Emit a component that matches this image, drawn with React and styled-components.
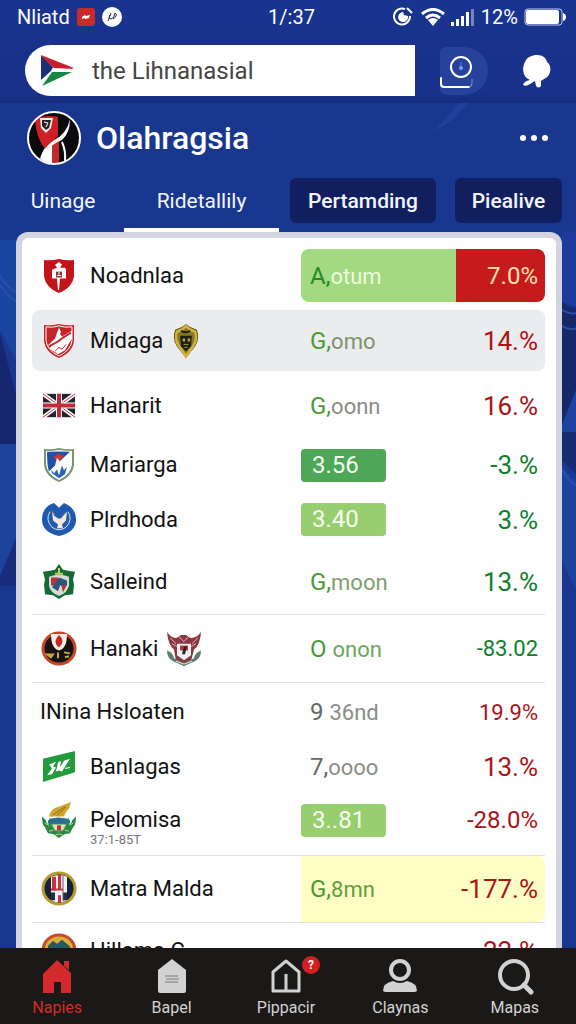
import React from 'react';
import styled, { createGlobalStyle, css } from 'styled-components';

const GlobalStyle = createGlobalStyle`
  * {
    box-sizing: border-box;
  }

  body {
    margin: 0;
    font-family: Roboto, "Liberation Sans", sans-serif;
    background: #1a3790;
  }

  button, input {
    font-family: inherit;
  }
`;

const Page = styled.div`
  position: relative;
  display: flex;
  flex-direction: column;
  height: 100vh;
  overflow: hidden;
  background: #1a3790;
`;

const Backdrop = styled.svg`
  position: absolute;
  inset: 0;
  width: 100%;
  height: 100%;
`;

const TopBar = styled.header`
  position: relative;
  padding-bottom: 7px;
  color: #fff;
  background: linear-gradient(#19348f, #18318a 90%, #162c7c);
`;

const StatusBar = styled.div`
  display: grid;
  grid-template-columns: 1fr auto 1fr;
  align-items: center;
  height: 34px;
  padding: 0 10px 0 17px;
  font-size: 20px;
`;

const StatusGroup = styled.div`
  display: flex;
  align-items: center;
  justify-content: ${({ $end }) => ($end ? 'flex-end' : 'flex-start')};
  gap: ${({ $end }) => ($end ? '6px' : '7px')};
`;

const SearchRow = styled.div`
  display: flex;
  align-items: center;
  gap: 25px;
  margin-top: 11px;
  padding: 0 15px 0 25px;
`;

const SearchBox = styled.label`
  display: flex;
  align-items: center;
  flex: 1;
  min-width: 0;
  height: 51px;
  padding-left: 14px;
  gap: 17px;
  border-radius: 26px 0 0 26px;
  background: #fff;
`;

const SearchInput = styled.input`
  flex: 1;
  min-width: 0;
  padding: 0;
  border: 0;
  outline: 0;
  background: transparent;
  color: #454545;
  font-size: 24px;
`;

const IconButton = styled.button`
  display: flex;
  align-items: center;
  justify-content: center;
  width: 48px;
  height: 48px;
  padding: 0;
  border: 0;
  color: #fff;
  background: ${({ $filled }) => ($filled ? '#26429a' : 'transparent')};
  border-radius: ${({ $filled }) => ($filled ? '6px 24px 24px 6px' : '0')};
`;

const TitleRow = styled.div`
  position: relative;
  display: flex;
  align-items: center;
  gap: 15px;
  height: 70px;
  padding: 0 18px 0 27px;
`;

const Title = styled.h1`
  flex: 1;
  margin: 0;
  color: #fff;
  font-size: 32px;
  font-weight: 500;
  line-height: 36px;
`;

const Tabs = styled.nav`
  position: relative;
  display: flex;
  gap: 11px;
  height: 59px;
  padding: 5px 14px 0 16px;
`;

const TabGroup = styled.div`
  display: flex;
  flex: ${({ $grow }) => $grow} 1 0;
  gap: ${({ $gap }) => $gap || '0'};
`;

const Tab = styled.button`
  flex: ${({ $grow }) => $grow} 1 0;
  height: 54px;
  padding: 0 0 4px;
  border: 0;
  border-bottom: 4px solid ${({ $active }) => ($active ? '#fff' : 'transparent')};
  color: #f2f6ff;
  background: transparent;
  font-size: 21px;
  white-space: nowrap;
`;

const TabPill = styled(Tab)`
  height: 45px;
  padding: 0;
  border: 0;
  border-radius: 6px;
  background: #121f5f;
  font-weight: 500;
`;

const Panel = styled.main`
  position: relative;
  flex: 1;
  min-height: 0;
  overflow: hidden;
  margin: 0 14px 0 16px;
  padding: 11px 11px 0 10px;
  border: 6px solid #d2d4df;
  border-bottom: 0;
  border-radius: 12px 12px 0 0;
  background: #fefefe;
`;

const Table = styled.table`
  display: block;
  width: 100%;

  tbody {
    display: block;
  }
`;

const Row = styled.tr`
  display: grid;
  grid-template-columns: 58px 211fr 155fr 89fr;
  height: ${({ $height }) => $height}px;
  margin-bottom: ${({ $gap }) => $gap || 0}px;
  padding-bottom: ${({ $note }) => ($note ? '8px' : '0')};
  border-bottom: ${({ $line }) => ($line ? '1px solid #e2e2e2' : '0')};
  border-radius: ${({ $selected }) => ($selected ? '8px' : '0')};
  background: ${({ $selected }) => ($selected ? '#ebeced' : 'transparent')};
`;

const CrestCell = styled.td`
  display: flex;
  align-items: center;
  padding: 0 0 0 9px;
`;

const NameCell = styled.th`
  display: flex;
  align-items: center;
  gap: 8px;
  grid-column: ${({ $wide }) => ($wide ? 'span 2' : 'auto')};
  padding: 0 0 0 ${({ $wide }) => ($wide ? '8px' : '0')};
  color: #111;
  font-size: 22px;
  font-weight: 400;
  line-height: 26px;
  text-align: left;
  white-space: nowrap;

  ${({ $note }) => $note && css`
    flex-direction: column;
    align-items: flex-start;
    gap: 0;
    padding-top: 14px;
  `}
`;

const Note = styled.small`
  color: #777;
  font-size: 13px;
  line-height: 14px;
`;

const fills = {
  split: ['#a2d981', '#c51b1c'],
  yellow: ['#fffec4', '#fffec4'],
};

const ValueCell = styled.td`
  display: flex;
  align-items: center;
  padding: 0 0 0 ${({ $pill }) => ($pill ? '0' : '9px')};
  border-radius: ${({ $fill }) => ($fill === 'split' ? '8px 0 0 8px' : '0')};
  background: ${({ $fill }) => ($fill ? fills[$fill][0] : 'transparent')};
  color: ${({ $color }) => $color || '#4b9a35'};
  font-size: 24px;
  white-space: nowrap;
`;

const Rest = styled.span`
  color: ${({ $color }) => $color || '#8b8d86'};
  font-size: 22px;
`;

const Pill = styled.span`
  width: 85px;
  padding-left: 11px;
  border-radius: 4px;
  background: ${({ $dark }) => ($dark ? '#4da757' : '#96ce70')};
  color: #f8fff2;
  line-height: 33px;
`;

const ChangeCell = styled.td`
  display: flex;
  align-items: center;
  justify-content: flex-end;
  padding: 0 7px 0 0;
  border-radius: ${({ $fill }) => ($fill ? '0 8px 8px 0' : '0')};
  background: ${({ $fill }) => ($fill ? fills[$fill][1] : 'transparent')};
  color: ${({ $up, $fill }) => ($fill === 'split' ? '#ffe0b0' : $up ? '#0f7f2c' : '#ad1217')};
  font-size: ${({ $size }) => $size || 26}px;
  white-space: nowrap;
`;

const BottomNav = styled.nav`
  position: relative;
  display: grid;
  grid-template-columns: repeat(5, 1fr);
  height: 76px;
  padding-right: 4px;
  background: #1a1918;
`;

const NavLink = styled.a`
  display: flex;
  flex-direction: column;
  align-items: center;
  padding-top: 9px;
  gap: 3px;
  color: ${({ $active }) => ($active ? '#d52a2b' : '#d2d2d2')};
  font-size: 16px;
  line-height: 20px;
  text-decoration: none;
`;

const NavIcon = styled.span`
  position: relative;
  display: flex;
`;

const Badge = styled.span`
  position: absolute;
  top: -1px;
  right: -16px;
  width: 18px;
  height: 18px;
  border-radius: 50%;
  background: #d1201f;
  color: #fff;
  font-size: 12px;
  font-weight: 700;
  line-height: 18px;
  text-align: center;
`;

const SHIELD = 'M3 2Q10 3 18 1Q26 3 33 2V18Q32 30 18 36Q4 30 3 18Z';

const crests = {
  red: (
    <>
      <path d={SHIELD} fill="#c3131b" />
      <path d="M18 4l3 3-2 3h5l1 2v9h-6l-1 12h-1l-1-12h-5v-9l5-2-2-3z" fill="#fff" />
      <path d="M15 14h6v6h-6z" fill="#8d3a3d" />
      <path d="M16 18h4M18 14v3" stroke="#fff" />
    </>
  ),
  slash: (
    <>
      <path d={SHIELD} fill="#c3252b" />
      <path d="M5 4Q12 5 18 3Q24 5 31 4V18Q30 28 18 34Q6 28 5 18Z" fill="none" stroke="#fff" />
      <path d="M18 5l2 4-1 2 2 3 10-6v8l-7 12-7 4-9-6 4-4-6 2 8-8 2-6z" fill="#fff" />
      <path d="M8 24l9-5 5-4 8-5" fill="none" stroke="#c3252b" strokeWidth="2" />
      <path d="M14 29l4-4 3 2 4-5" fill="none" stroke="#c3252b" />
    </>
  ),
  flag: (
    <>
      <path d="M2 6h32v24H2z" fill="#24242f" />
      <path d="M2 6l32 24M34 6L2 30" stroke="#fff" strokeWidth="4" />
      <path d="M2 6l32 24M34 6L2 30" stroke="#bd2738" strokeWidth="1" />
      <path d="M18 6v24M2 18h32" stroke="#fff" strokeWidth="6" />
      <path d="M18 6v24M2 18h32" stroke="#c22a37" strokeWidth="4" />
    </>
  ),
  blueShield: (
    <>
      <path d={SHIELD} fill="#7c9270" />
      <path d="M5 4Q12 4 18 3Q25 4 31 4V18Q30 28 18 34Q6 28 5 18Z" fill="#fff" />
      <path d="M6 5Q18 4 29 5L8 25Q6 20 6 5Z" fill="#1f51a8" />
      <path d="M12 11l5-4 6 2-5 6z" fill="#cf3432" />
      <path d="M16 11l3 4-1 4 4 2-2 7-4-5-5 4 3-8z" fill="#f5f4ef" />
      <path d="M10 23l3 4 3-4 2 6 3-10 2 5 3-4-2 8-6 4-7-5z" fill="#3163b4" />
    </>
  ),
  blueRound: (
    <>
      <path d="M13 1l5 5 5-5q12 5 12 17 0 13-17 17Q1 31 1 18 1 5 13 1Z" fill="#1f5ab0" />
      <path d="M9 10Q4 18 11 26q7 5 14 0 7-8 2-16" fill="none" stroke="#dbe8f7" strokeWidth="1" />
      <path d="M11 9l2 5 4 3h3l4-5 2-2-1 9-4 4 1 4h-6l1-4-5-4z" fill="#f2ead3" />
      <path d="M11 10l3 3M24 12l-3 3" stroke="#c78238" />
    </>
  ),
  green: (
    <>
      <path d="M18 0l4 6 5 1 7 1-2 8 1 5-1 10-8 1-6 4-6-4-8-1-1-10 1-5-2-8 7-1 5-1z" fill="#126b35" />
      <path d="M8 13q10-4 20 0v9q-2 8-10 11Q9 29 8 22Z" fill="#d9d8d1" />
      <path d="M10 14h7v8h-7zM20 21h6l-4 8z" fill="#b9343a" />
      <path d="M18 14l8 3v5h-7l-2 6-6-4z" fill="#32547c" />
      <path d="M18 4v8M14 10h8" stroke="#c2cf60" strokeWidth="2" />
    </>
  ),
  blackRed: (
    <>
      <circle cx="18" cy="18" r="16" fill="#171210" stroke="#c64427" strokeWidth="3" />
      <path d="M10 3h16q0 15-8 17-8-2-8-17Z" fill="#f5eee5" />
      <path d="M18 4q7 6 0 13-7-6 0-13Z" fill="#c62524" />
      <path d="M6 24h6l-2 3zM17 22v6M23 22l6 1M24 27l4-1" stroke="#c3ab3d" strokeWidth="2" fill="#c3ab3d" />
    </>
  ),
  banner: (
    <>
      <path d="M2 10L34 2v22L2 34Z" fill="#229b3d" />
      <path d="M8 16l7-3-3 5 3 1-4 7-5 1 5-7zM17 14l3-2-1 7 4-7 6-2-8 13-3-1-3 1z" fill="#fff" />
      <path d="M24 20l5-1" stroke="#fff" />
    </>
  ),
  palm: (
    <>
      <path d="M8 15Q10 6 18 5L30 0l-2 7q-3 2-5 8Z" fill="#d2a32d" />
      <path d="M12 13l12-8M16 14l9-9" stroke="#8f711b" />
      <path d="M8 17h20v8q-4 7-10 8Q9 29 8 25Z" fill="#35926b" />
      <path d="M7 19q10-6 22 0v3H7z" fill="#276f8e" />
      <path d="M11 23h14l-3 6h-8z" fill="#e6dfa7" />
      <path d="M16 24h4v5h-4z" fill="#b43b32" />
      <path d="M1 15q0 9 3 11l3 6 5 1 6 4 6-4 5-1 3-6q3-2 3-11-4 3-5 7l-4 1-2 6-6 3-6-3-2-6-4-1q-1-4-5-7Z" fill="#288847" />
      <path d="M4 22l4 2M8 30l4-1M32 22l-4 2M28 30l-4-1M14 34l4-1 4 1" stroke="#c9d969" />
    </>
  ),
  stripes: (
    <>
      <circle cx="18" cy="18" r="16" fill="#172138" stroke="#b59a2d" strokeWidth="3" />
      <path d="M10 6q8-4 16 0v24q-8 5-16 0Z" fill="#f4f1ef" />
      <path d="M11 6h4v14h-4zM17 4h3v15h-3zM17 25h3v8h-3z" fill="#c7343e" />
      <path d="M10 22h4v8h-4zM22 22h4v8h-4z" fill="#232d49" />
      <path d="M10 19h12" stroke="#c7343e" strokeWidth="2" />
      <path d="M22 5v26" stroke="#59617a" />
    </>
  ),
  sunset: (
    <>
      <circle cx="18" cy="18" r="16" fill="#e0ae36" stroke="#c64d2c" strokeWidth="3" />
      <path d="M7 13l5-5 4 3 5-4 8 7v14H7z" fill="#245b62" />
    </>
  ),
  gold: (
    <>
      <path d="M18 1q5 4 13 6 4 9-2 17l-11 12L7 24Q1 16 5 7q8-2 13-6Z" fill="#544716" />
      <path d="M18 3q4 4 11 6 3 7-2 14l-9 11-9-11Q4 16 7 9q7-2 11-6Z" fill="#8a7627" stroke="#ceb33d" strokeWidth="3" />
      <path d="M11 13h14l-1 11-6 5-6-5z" fill="#1d1d1a" />
      <path d="M14 16h3v3h-3zM20 16h3v3h-3z" fill="#c2a539" />
      <path d="M15 22h6M16 25h4" stroke="#c2a539" />
      <path d="M12 8q6 3 11 0" stroke="#1d1d1a" strokeWidth="2" />
    </>
  ),
  eagle: (
    <>
      <path d="M1 1q5 7 10 6l4-3h5l4 3q6 1 11-6-1 14-7 18l-3 12-7 5-8-5-2-12Q2 14 1 1Z" fill="#8c3743" />
      <path d="M4 7l6 6M6 13l5 3M32 7l-6 6M30 13l-5 3M13 6l5 5 4-5" stroke="#dcb6b4" strokeWidth="1" />
      <path d="M11 13h14v12l-7 5-7-5z" fill="#f1eeee" />
      <path d="M14 15h8v5h-8z" fill="#bd3237" />
      <path d="M18 16h3l-2 8h-3z" fill="#242836" />
      <path d="M1 20q6 2 7 8l10 5 10-5q1-6 7-8 0 8-6 11l-11 5-11-5q-6-3-6-11Z" fill="#598171" />
      <path d="M10 31l8 3 8-3" fill="none" stroke="#e6e5dc" />
    </>
  ),
};

const Crest = ({ name, width = 36, height = 36 }) => (
  <svg width={width} height={height} viewBox="0 0 36 37" fill="none" preserveAspectRatio="none" aria-hidden="true">
    {crests[name]}
  </svg>
);

const rows = [
  { name: 'Noadnlaa', crest: 'red', lead: 'A,', rest: 'otum', leadColor: '#248a2a', restColor: '#effbdc', change: '7.0%', size: 24, fill: 'split', height: 53, gap: 8 },
  { name: 'Midaga', crest: 'slash', extra: 'gold', lead: 'G,', rest: 'omo', restColor: '#7d936c', change: '14.%', height: 61, selected: true },
  { name: 'Hanarit', crest: 'flag', lead: 'G,', rest: 'oonn', change: '16.%', height: 70 },
  { name: 'Mariarga', crest: 'blueShield', pill: '3.56', dark: true, change: '-3.%', up: true, height: 48 },
  { name: 'Plrdhoda', crest: 'blueRound', pill: '3.40', change: '3.%', up: true, height: 61 },
  { name: 'Salleind', crest: 'green', lead: 'G,', rest: 'moon', restColor: '#7ca26b', change: '13.%', up: true, height: 65, line: true },
  { name: 'Hanaki', crest: 'blackRed', extra: 'eagle', lead: 'O ', rest: 'onon', restColor: '#6da65c', change: '-83.02', size: 22, up: true, height: 68, line: true },
  { name: 'INina Hsloaten', lead: '9 ', rest: '36nd', leadColor: '#666', change: '19.9%', size: 22, height: 58 },
  { name: 'Banlagas', crest: 'banner', lead: '7,', rest: 'oooo', leadColor: '#666', change: '13.%', height: 52 },
  { name: 'Pelomisa', crest: 'palm', note: '37:1-85T', pill: '3..81', change: '-28.0%', size: 24, height: 63, line: true },
  { name: 'Matra Malda', crest: 'stripes', lead: 'G,', rest: '8mn', restColor: '#5da03c', change: '-177.%', fill: 'yellow', height: 67, line: true },
  { name: 'Hillama C', crest: 'sunset', lead: '', rest: '', change: '22.%', height: 56 },
];

const StandingRow = ({ row }) => (
  <Row $height={row.height} $gap={row.gap} $line={row.line} $selected={row.selected} $note={row.note}>
    {row.crest && (
      <CrestCell>
        <Crest name={row.crest} />
      </CrestCell>
    )}
    <NameCell scope="row" colSpan={row.crest ? 1 : 2} $wide={!row.crest} $note={row.note}>
      <span>{row.name}</span>
      {row.extra && <Crest name={row.extra} width={row.extra === 'gold' ? 30 : 36} />}
      {row.note && <Note>{row.note}</Note>}
    </NameCell>
    <ValueCell $pill={row.pill} $fill={row.fill} $color={row.leadColor}>
      {row.pill ? (
        <Pill $dark={row.dark}>{row.pill}</Pill>
      ) : (
        <span>
          {row.lead}
          <Rest $color={row.restColor}>{row.rest}</Rest>
        </span>
      )}
    </ValueCell>
    <ChangeCell $fill={row.fill} $up={row.up} $size={row.size}>{row.change}</ChangeCell>
  </Row>
);

const BackdropArt = () => (
  <Backdrop viewBox="0 0 576 1024" preserveAspectRatio="none" aria-hidden="true">
    <path d="M0 240h16v120L0 330z" fill="#1b469f" />
    <path d="M0 334l16 60v50H0z" fill="#17276f" />
    <path d="M0 444h16v100L0 585z" fill="#1c449d" />
    <path d="M0 576l16-38v48H0z" fill="#182c7b" />
    <path d="M562 232h14v75l-14-5z" fill="#1b3c9b" />
    <path d="M562 302q10 8 14 5v83l-14 35z" fill="#172768" />
    <path d="M562 425l14-35v42h-14z" fill="#1b439f" />
    <path d="M562 432h14v42l-14-14z" fill="#182a70" />
    <path d="M562 465q9 14 14 15v110l-14-30z" fill="#1b439d" />
    <path d="M0 276q8 12 16 16M0 285q8 12 16 16M562 310q9 5 14 3M562 326q9 5 14 2M562 470q9 14 14 15" fill="none" stroke="#2751ac" strokeWidth="2" />
    <path d="M434 132l25-29h10l-16 16z" fill="#22409b" />
  </Backdrop>
);

const App = () => (
  <>
    <GlobalStyle />
    <Page>
      <BackdropArt />
      <TopBar>
        <StatusBar>
          <StatusGroup>
            <span>Nliatd</span>
            <svg width="18" height="18" viewBox="0 0 18 18" aria-hidden="true">
              <rect width="18" height="18" rx="3" fill="#c92b28" />
              <path d="M5 9l3-2 1 1 4-1-1 3-4 1-1-1-2 1z" fill="#fff" />
            </svg>
            <svg width="20" height="20" viewBox="0 0 20 20" aria-hidden="true">
              <circle cx="10" cy="10" r="10" fill="#fff" />
              <path d="M9 6L6 14M8 8q-2 4 1 4t4-6q2 1 1 3t-3 3" fill="none" stroke="#1c2b61" strokeWidth="1" />
            </svg>
          </StatusGroup>
          <time>1/:37</time>
          <StatusGroup $end>
            <svg width="22" height="20" viewBox="0 0 22 20" fill="none" stroke="#fff" strokeWidth="2" aria-hidden="true">
              <path d="M12 2A8 8 0 1 0 17 9M14 1l5 5" />
              <path d="M10 5l1 3 4 1a5 5 0 1 1-5-4z" fill="#fff" stroke="none" />
            </svg>
            <svg width="24" height="18" viewBox="0 0 24 18" fill="none" stroke="#fff" strokeWidth="3" aria-hidden="true">
              <path d="M1 6q11-9 22 0M5 10q7-6 14 0" />
              <path d="M7 12q5-4 10 0l-5 6z" fill="#fff" stroke="none" />
            </svg>
            <svg width="24" height="18" viewBox="0 0 24 18" fill="#fff" aria-hidden="true">
              <path d="M0 14h3v4H0zM5 11h3v7H5zM10 8h3v10h-3zM15 4h3v14h-3z" />
              <path d="M20 1h3v17h-3z" opacity=".4" />
            </svg>
            <span>12%</span>
            <svg width="42" height="18" viewBox="0 0 42 18" aria-hidden="true">
              <rect x="1" y="1" width="37" height="16" rx="3" fill="none" stroke="#bfcaf0" strokeWidth="1" />
              <rect x="2" y="2" width="33" height="14" rx="2" fill="#fff" />
              <path d="M39 5q3 1 3 4t-3 4z" fill="#fff" />
            </svg>
          </StatusGroup>
        </StatusBar>
        <SearchRow>
          <SearchBox>
            <svg width="36" height="34" viewBox="0 0 36 34" aria-hidden="true">
              <path d="M2 1L35 14l-20-1z" fill="#c91f2d" />
              <path d="M2 1l12 11 20 3-20 5L2 33z" fill="#fff" />
              <path d="M2 1l12 12-2 4-10 9z" fill="#1b3076" />
              <path d="M2 2l33 13-20-1z" fill="#c91f2d" />
              <path d="M3 32l10-14h20z" fill="#16883f" />
            </svg>
            <SearchInput type="text" aria-label="Search" defaultValue="the Lihnanasial" />
          </SearchBox>
          <IconButton type="button" aria-label="Camera" $filled>
            <svg width="48" height="48" viewBox="0 0 48 48" fill="none" stroke="#fff" aria-hidden="true">
              <circle cx="21" cy="20" r="10" strokeWidth="2" />
              <path d="M1 31v6q0 3 3 3h25" strokeWidth="2" strokeLinecap="round" />
              <path d="M29 40q3 0 3-4v-4" stroke="#8494cd" />
              <path d="M21 15v4" stroke="#6b82cf" />
              <circle cx="21" cy="21" r="2" fill="#7e9cee" stroke="none" />
            </svg>
          </IconButton>
          <IconButton type="button" aria-label="Messages">
            <svg width="32" height="36" viewBox="0 0 32 36" fill="#fff" aria-hidden="true">
              <path d="M16 2c6 0 9 3 10 7 5 3 5 14-3 17l-3 2v5q-2 3-5 0l-1-5-5 3q-4 3-7 1 1-4 7-5C1 24 1 14 4 9c2-5 7-7 12-7Z" />
            </svg>
          </IconButton>
        </SearchRow>
      </TopBar>

      <TitleRow>
        <svg width="54" height="54" viewBox="0 0 54 54" aria-hidden="true">
          <circle cx="27" cy="27" r="26" fill="#0b0a0c" />
          <path d="M8 8q10-5 23-2v24L18 38Q9 27 8 8Z" fill="#cf2027" />
          <path d="M13 7h13l-2 10-5 5-5-5z" fill="#eee" />
          <path d="M15 9h9l-2 8-3 2-4-4z" fill="#252124" />
          <path d="M17 11l4 1-2 4" fill="none" stroke="#fff" />
          <path d="M13 48l4-10 9-5-1 20q-6-1-12-5z" fill="#fff" />
          <path d="M25 32l7-3v23h-7z" fill="#c22b2a" />
          <path d="M43 8q-3 15-17 22-9 6-13 17 12-15 22-18Q43 22 43 8Z" fill="#fff" />
          <path d="M35 31q4 9 3 19" fill="none" stroke="#fff" strokeWidth="2" />
          <path d="M40 13q-4 9-12 15" fill="none" stroke="#171316" />
          <circle cx="27" cy="27" r="26" fill="none" stroke="#fff" strokeWidth="2" />
        </svg>
        <Title>Olahragsia</Title>
        <IconButton type="button" aria-label="More">
          <svg width="30" height="8" viewBox="0 0 30 8" fill="#fff" aria-hidden="true">
            <circle cx="4" cy="4" r="3" />
            <circle cx="15" cy="4" r="3" />
            <circle cx="26" cy="4" r="3" />
          </svg>
        </IconButton>
      </TitleRow>

      <Tabs>
        <TabGroup $grow={263} $gap="14px">
          <Tab type="button" $grow={94}>Uinage</Tab>
          <Tab type="button" $grow={155} $active>Ridetallily</Tab>
        </TabGroup>
        <TabGroup $grow={272} $gap="19px">
          <TabPill type="button" $grow={146}>Pertamding</TabPill>
          <TabPill type="button" $grow={107}>Piealive</TabPill>
        </TabGroup>
      </Tabs>

      <Panel>
        <Table>
          <tbody>
            {rows.map((row) => (
              <StandingRow key={row.name} row={row} />
            ))}
          </tbody>
        </Table>
      </Panel>

      <BottomNav>
        <NavLink href="#home" $active>
          <svg width="36" height="38" viewBox="0 0 36 38" fill="currentColor" aria-hidden="true">
            <path d="M18 3l14 13v20H22V25h-7v11H4V17z" />
            <path d="M25 4h5v9l-5-4z" />
          </svg>
          Napies
        </NavLink>
        <NavLink href="#news">
          <svg width="36" height="38" viewBox="0 0 36 38" fill="currentColor" aria-hidden="true">
            <path d="M18 2l14 11v21q0 2-2 2H6q-2 0-2-2V13z" />
            <path d="M11 19h13M12 22h13M11 25h13" stroke="#77797a" strokeWidth="1" />
          </svg>
          Bapel
        </NavLink>
        <NavLink href="#matches">
          <NavIcon>
            <svg width="36" height="38" viewBox="0 0 36 38" fill="none" stroke="currentColor" strokeWidth="3" aria-hidden="true">
              <path d="M18 4l13 11v19H5V15zM18 17v17" strokeLinejoin="round" />
            </svg>
            <Badge>?</Badge>
          </NavIcon>
          Pippacir
        </NavLink>
        <NavLink href="#profile">
          <svg width="36" height="38" viewBox="0 0 36 38" fill="currentColor" aria-hidden="true">
            <circle cx="18" cy="13" r="9" fill="none" stroke="currentColor" strokeWidth="4" />
            <path d="M11 24q7 4 14 0 10 2 10 10l-2 1H3l-2-1q0-8 10-10z" />
          </svg>
          Claynas
        </NavLink>
        <NavLink href="#search">
          <svg width="38" height="38" viewBox="0 0 38 38" fill="none" stroke="currentColor" strokeWidth="4" aria-hidden="true">
            <circle cx="18" cy="18" r="14" />
            <path d="M28 28l7 7" strokeWidth="5" strokeLinecap="round" />
          </svg>
          Mapas
        </NavLink>
      </BottomNav>
    </Page>
  </>
);

export default App;
